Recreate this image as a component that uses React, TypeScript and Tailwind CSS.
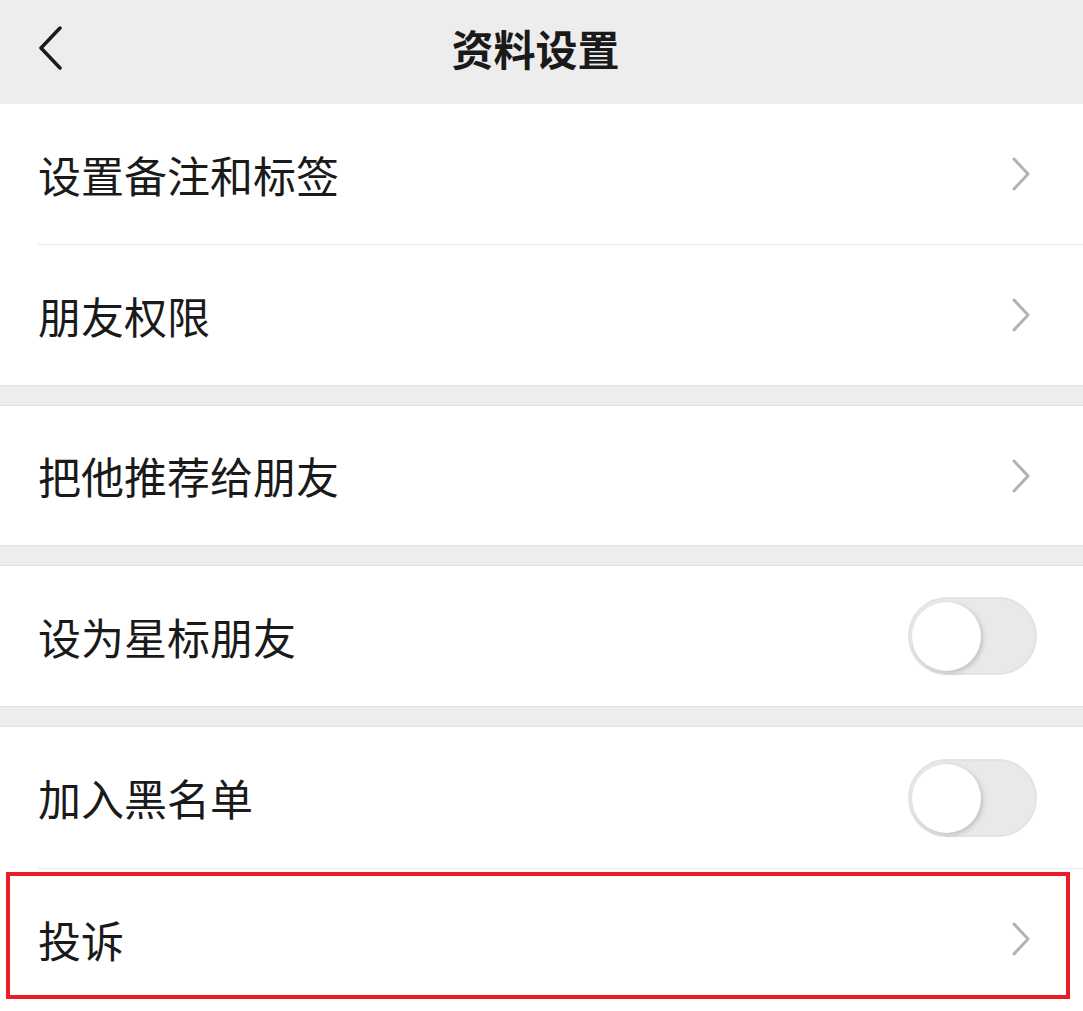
import React from "react";

const font = { fontFamily: '"Noto Sans CJK SC", "Noto Sans", sans-serif' };

function Chevron() {
  return (
    <svg width="20" height="34" viewBox="0 0 20 34" className="mr-[52px]">
      <polyline points="3,2 17,17 3,32" fill="none" stroke="#b2b2b2" strokeWidth="3" strokeLinecap="round" strokeLinejoin="round" />
    </svg>
  );
}

function Toggle() {
  return (
    <div className="relative mr-[46px] h-[78px] w-[129px] rounded-full border-[2px] border-[#e3e3e5] bg-[#e9e9eb]">
      <div className="absolute left-[2px] top-[3px] h-[69px] w-[69px] rounded-full bg-white shadow-[2px_2px_5px_rgba(0,0,0,0.18)]" />
    </div>
  );
}

function Row({ label, right, divider, h = "h-[140px]" }: { label: string; right: React.ReactNode; divider?: boolean; h?: string }) {
  return (
    <div className="bg-white">
      <div className={`flex ${h} items-center justify-between pl-[38px]`}>
        <span className="text-[43px] leading-none text-[#1a1a1a]">{label}</span>
        {right}
      </div>
      {divider && <div className="ml-[38px] h-px bg-[#e8e8e8]" />}
    </div>
  );
}

function Gap() {
  return <div className="h-[21px] border-y border-[#e3e3e3] bg-[#ededed]" />;
}

export default function App() {
  return (
    <div className="min-h-[1011px] w-full overflow-hidden bg-white" style={font}>
      <div className="relative flex h-[104px] items-center justify-center bg-[#ededed]">
        <svg width="26" height="44" viewBox="0 0 26 44" className="absolute left-[38px] top-[26px]">
          <polyline points="22,2 3,22 22,42" fill="none" stroke="#1a1a1a" strokeWidth="3.5" strokeLinecap="round" strokeLinejoin="round" />
        </svg>
        <span className="-mt-[8px] mr-[12px] text-[42px] font-bold leading-none text-[#1a1a1a]">资料设置</span>
      </div>
      <Row label="设置备注和标签" right={<Chevron />} divider />
      <Row label="朋友权限" right={<Chevron />} />
      <Gap />
      <Row label="把他推荐给朋友" right={<Chevron />} h="h-[139px]" />
      <Gap />
      <Row label="设为星标朋友" right={<Toggle />} />
      <Gap />
      <Row label="加入黑名单" right={<Toggle />} h="h-[141px]" divider />
      <div className="relative">
        <Row label="投诉" right={<Chevron />} />
        <div className="pointer-events-none absolute left-[6px] top-[3px] h-[127px] w-[1064px] border-[4px] border-[#ec1c24]" />
      </div>
    </div>
  );
}
